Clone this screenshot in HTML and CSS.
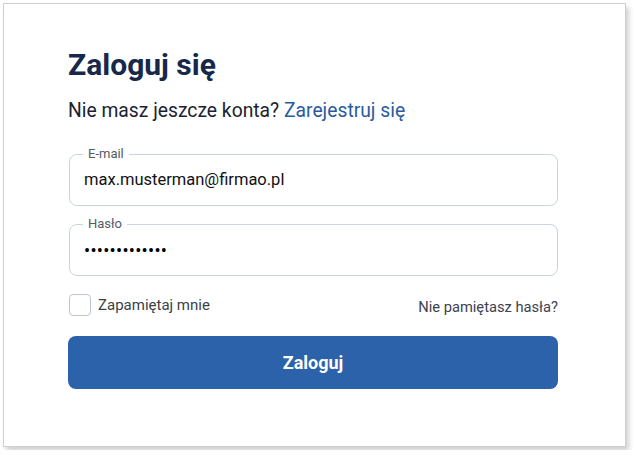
FILE: index.html
```html
<!DOCTYPE html>
<html lang="pl">
<head>
<meta charset="utf-8">
<link rel="stylesheet" href="styles.css">
</head>
<body>
<div class="card">
  <h1 class="title">Zaloguj się</h1>
  <p class="subtitle">Nie masz jeszcze konta? <a class="link" href="#">Zarejestruj się</a></p>
  <div class="field field-email">
    <span class="legend">E-mail</span>
    <div class="value">max.musterman@firmao.pl</div>
  </div>
  <div class="field field-pass">
    <span class="legend">Hasło</span>
    <div class="value dots">•••••••••••••</div>
  </div>
  <div class="row">
    <label class="remember"><span class="box"></span>Zapamiętaj mnie</label>
    <a class="forgot" href="#">Nie pamiętasz hasła?</a>
  </div>
  <button class="btn">Zaloguj</button>
</div>
</body>
</html>
```
FILE: styles.css
```css
html, body { margin: 0; padding: 0; background: #fff; }
body { font-family: Roboto, "Noto Sans", sans-serif; padding: 3px; }
.card {
  box-sizing: border-box;
  width: 623px;
  height: 444px;
  border: 1px solid #cfcfcf;
  box-shadow: 3px 4px 5px rgba(0,0,0,0.18);
  padding: 43px 66px 0 64px;
}
.title {
  margin: 0;
  font-size: 30px;
  line-height: 36px;
  font-weight: 700;
  color: #17284a;
}
.subtitle {
  margin: 15px 0 0 0;
  font-size: 19.3px;
  line-height: 26px;
  color: #1b2232;
}
.link { color: #2b5aa0; text-decoration: none; }
.field {
  position: relative;
  margin: 30px 1px 0 1px;
  padding: 0 14px;
  border: 1px solid #c9d3e4;
  border-radius: 8px;
  height: 52px;
  box-sizing: border-box;
  display: flex;
  align-items: center;
}
.field-pass { margin-top: 18px; }
.legend {
  position: absolute;
  top: -8px;
  left: 13px;
  padding: 0 5px;
  background: #fff;
  font-size: 13px;
  line-height: 14px;
  color: #555b66;
}
.value {
  font-size: 16.5px;
  line-height: 20px;
  color: #111;
}
.dots {
  font-size: 14px;
  letter-spacing: 0.2px;
  color: #000;
  transform: scale(1.3);
  transform-origin: left center;
}
.row {
  margin-top: 18px;
  height: 22px;
  display: flex;
  justify-content: space-between;
  align-items: center;
}
.remember {
  display: flex;
  align-items: center;
  font-size: 15px;
  line-height: 22px;
  color: #3a3f48;
}
.box {
  box-sizing: border-box;
  width: 22px;
  height: 22px;
  border: 1px solid #bcc4d2;
  border-radius: 4px;
  margin: 0 7px 0 1px;
}
.forgot {
  font-size: 14.7px;
  color: #3c4250;
  text-decoration: none;
  margin-right: 1px;
  margin-top: 3px;
}
.btn {
  display: block;
  margin: 20px 0 0 0;
  width: 490px;
  height: 53px;
  border: none;
  border-radius: 8px;
  background: #2c62a9;
  color: #fff;
  font-family: Roboto, "Noto Sans", sans-serif;
  font-size: 18px;
  font-weight: 700;
}
```
